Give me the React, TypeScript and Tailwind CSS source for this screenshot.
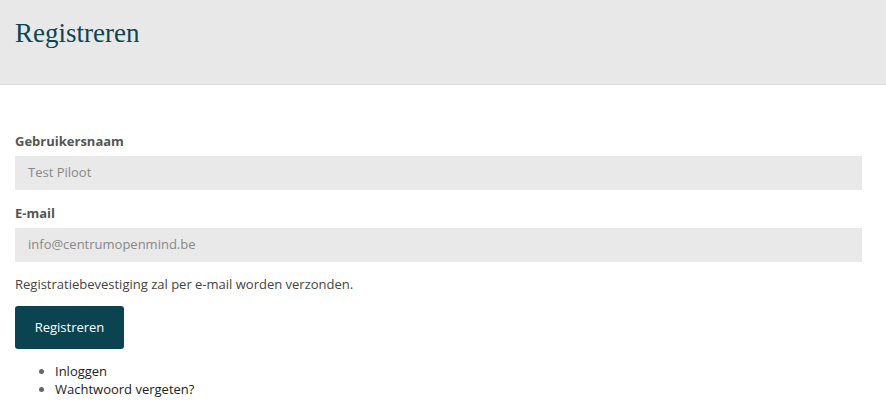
import React, { FC } from "react";

const App: FC = () => {
    return (
        <div className="w-[886px] h-[408px] bg-white overflow-hidden font-['Open_Sans',sans-serif] text-[13px]">
            <div className="h-[85px] bg-[#e8e8e8] border-b border-[#dcdcdc] px-[15px] pt-[16px]">
                <h1 className="font-['Liberation_Serif',serif] text-[27px] leading-[34px] text-[#0e4550]">Registreren</h1>
            </div>
            <form className="pl-[15px] pr-[24px] pt-[47px]">
                <label className="block font-bold text-[#555] leading-[18px]">Gebruikersnaam</label>
                <div className="mt-[6px] h-[34px] bg-[#e9e9e9] pl-[13px] flex items-center text-[#888]">Test Piloot</div>
                <label className="block font-bold text-[#555] leading-[18px] mt-[14px]">E-mail</label>
                <div className="mt-[6px] h-[34px] bg-[#e9e9e9] pl-[13px] flex items-center text-[#888]">info@centrumopenmind.be</div>
                <p className="mt-[13px] text-[#444] leading-[18px]">Registratiebevestiging zal per e-mail worden verzonden.</p>
                <button type="button" className="mt-[13px] w-[109px] h-[43px] bg-[#0b4450] rounded-[3px] text-white">Registreren</button>
                <ul className="mt-[13px] pl-[40px] list-disc text-[#222] leading-[18px] marker:text-[#666]">
                    <li>Inloggen</li>
                    <li>Wachtwoord vergeten?</li>
                </ul>
            </form>
        </div>
    );
}

export default App;
